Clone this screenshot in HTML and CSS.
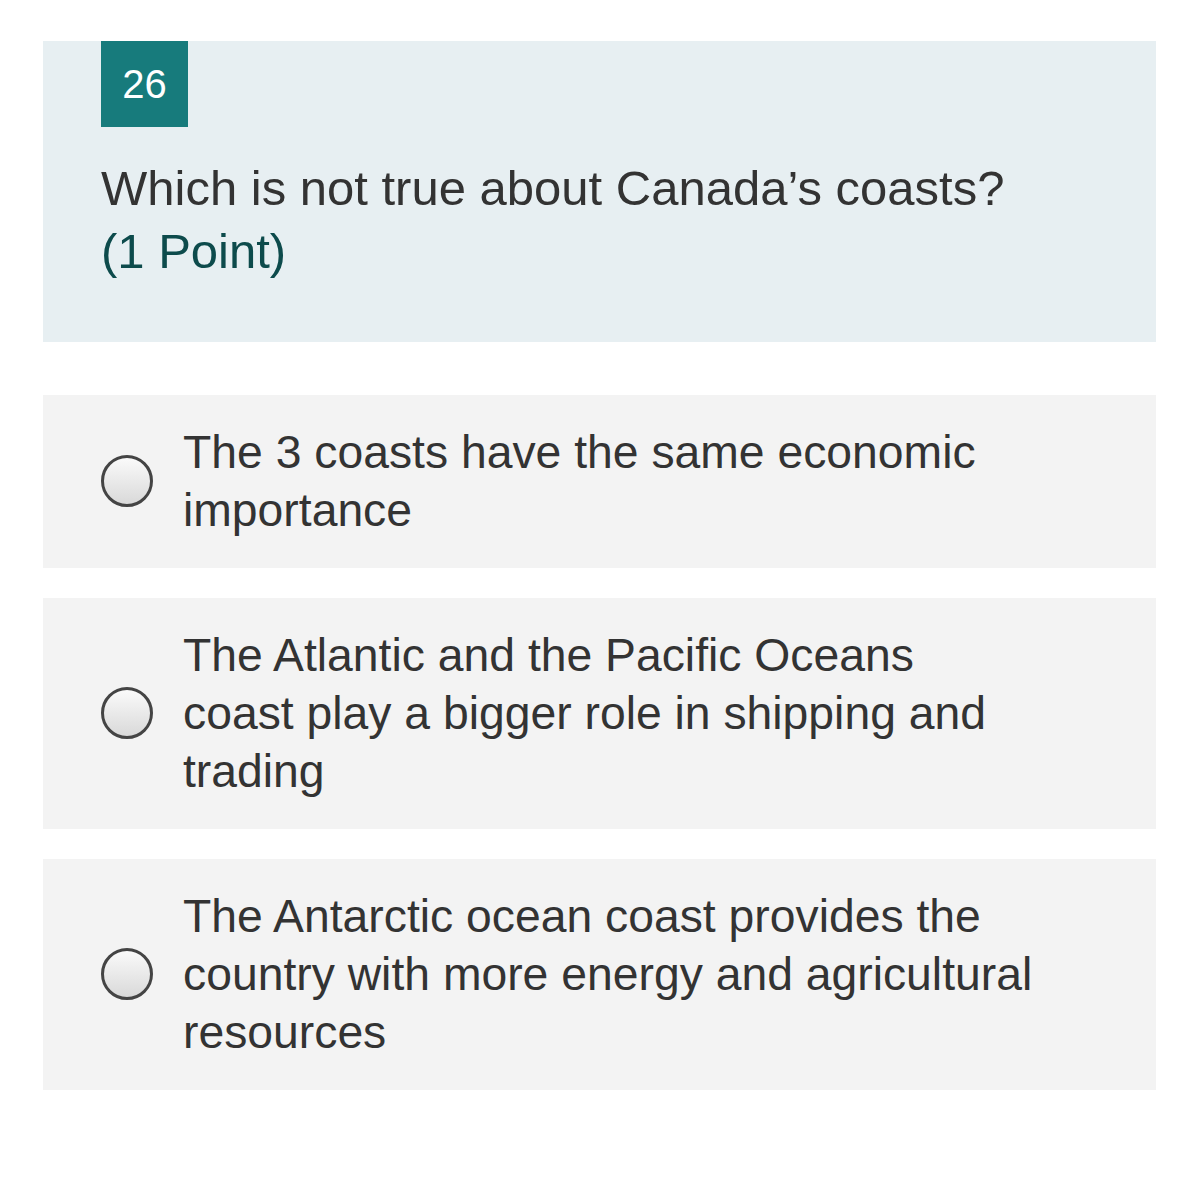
FILE: index.html
```html
<!DOCTYPE html>
<html lang="en">
<head>
<meta charset="utf-8">
<title>Question 26</title>
<link rel="stylesheet" href="styles.css">
</head>
<body>
<main class="page">
  <section class="question">
    <div class="badge">26</div>
    <div class="question-text">
      <div class="title">Which is not true about Canada’s coasts?</div>
      <div class="points">(1 Point)</div>
    </div>
  </section>
  <div class="options">
    <label class="option">
      <span class="radio"></span>
      <span class="option-text">The 3 coasts have the same economic importance</span>
    </label>
    <label class="option">
      <span class="radio"></span>
      <span class="option-text">The Atlantic and the Pacific Oceans coast play a bigger role in shipping and trading</span>
    </label>
    <label class="option">
      <span class="radio"></span>
      <span class="option-text">The Antarctic ocean coast provides the country with more energy and agricultural resources</span>
    </label>
  </div>
</main>
</body>
</html>
```
FILE: styles.css
```css
html, body {
  margin: 0;
  padding: 0;
  background: #ffffff;
}
body {
  font-family: "Liberation Sans", Arial, sans-serif;
  color: #333333;
}
.page {
  padding: 41px 44px 0 43px;
}
.question {
  background: #e7eff2;
  padding: 0 58px 59px 58px;
}
.badge {
  width: 87px;
  height: 86px;
  background: #177b7c;
  color: #ffffff;
  font-size: 40px;
  display: flex;
  align-items: center;
  justify-content: center;
}
.question-text {
  margin-top: 30px;
  font-size: 49px;
  line-height: 63px;
}
.title {
  color: #333333;
}
.points {
  color: #0d4b4c;
}
.options {
  margin-top: 53px;
  display: flex;
  flex-direction: column;
  gap: 30px;
}
.option {
  background: #f3f3f3;
  display: flex;
  align-items: center;
  gap: 30px;
  padding: 28px 121px 29px 58px;
}
.radio {
  flex: 0 0 auto;
  width: 46px;
  height: 46px;
  border: 3px solid #444444;
  border-radius: 50%;
  background: linear-gradient(#fafafa, #d9d9d9);
}
.option-text {
  font-size: 46.3px;
  line-height: 58px;
  color: #333333;
}
```
